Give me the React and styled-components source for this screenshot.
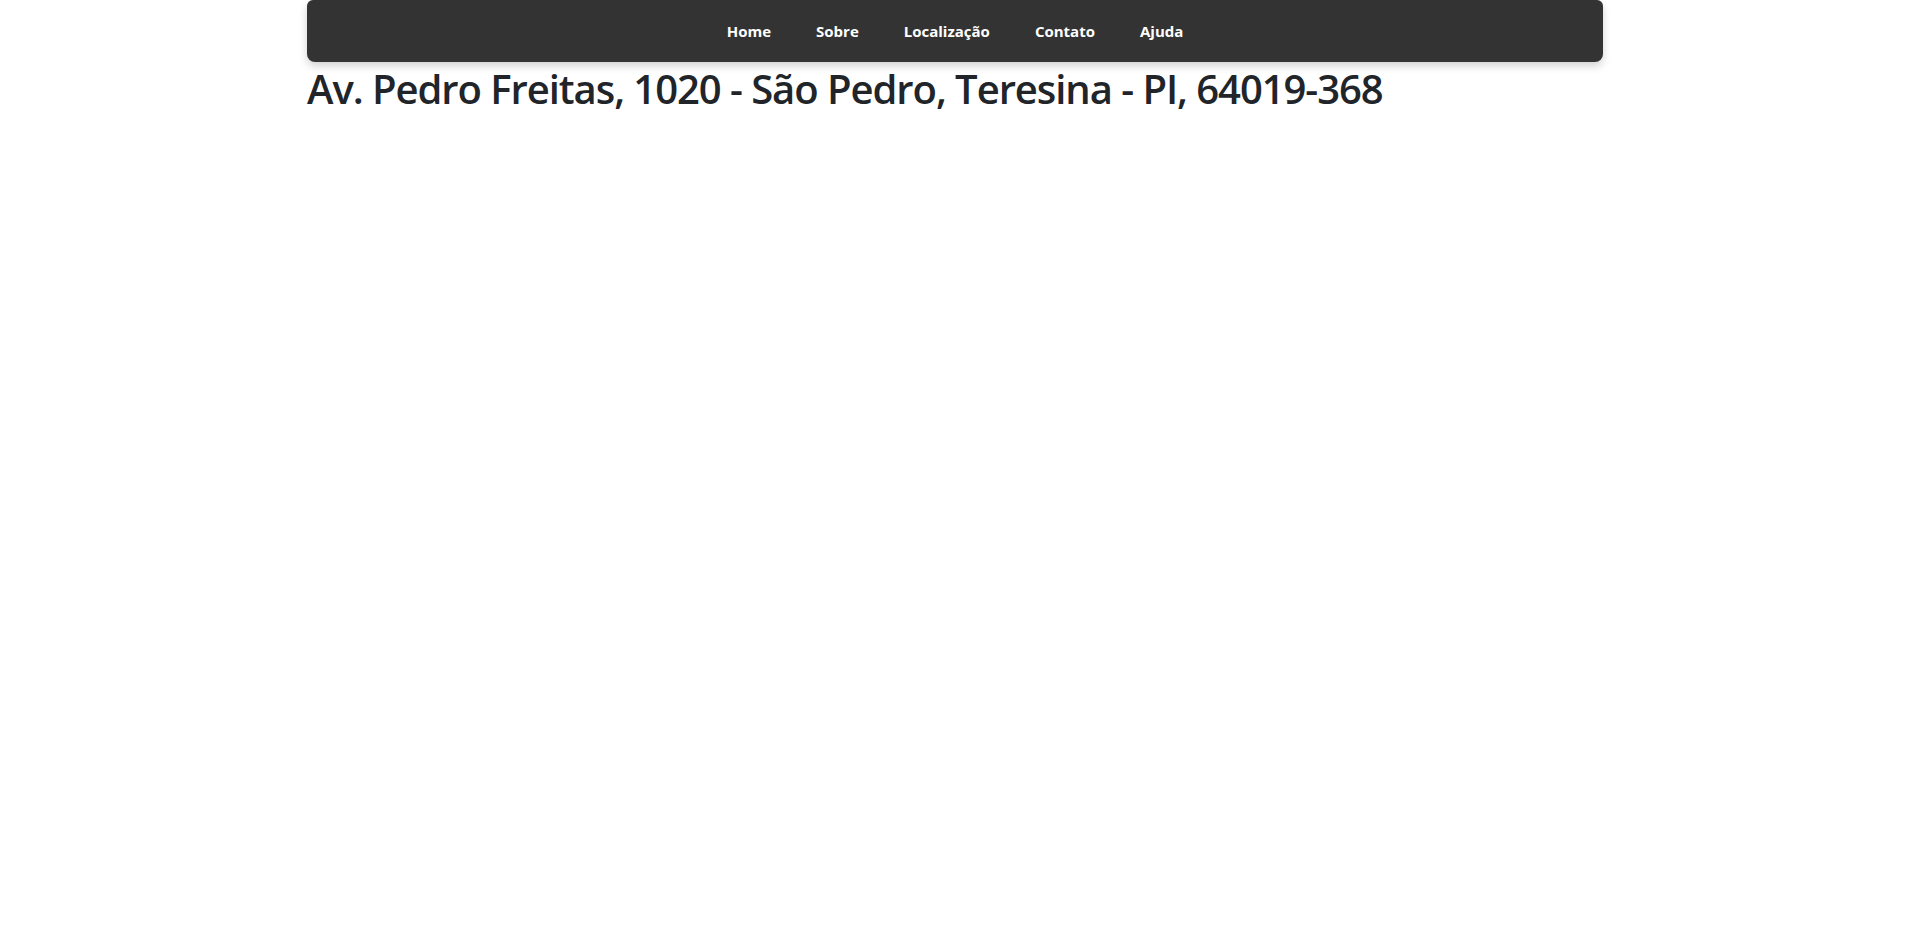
import React from 'react'
import styled, { createGlobalStyle } from 'styled-components'

const GlobalStyle = createGlobalStyle`
  *, *::before, *::after { box-sizing: border-box; }
  body {
    margin: 0;
    background: #fff;
    color: #212529;
    font-family: "Open Sans", "Noto Sans", sans-serif;
  }
`

const Container = styled.div`
  width: 1296px;
  margin-left: 307px;
`

const NavBar = styled.nav`
  height: 62px;
  background: #333333;
  border-radius: 6px 6px 8px 8px;
  box-shadow: 0 4px 8px rgba(0, 0, 0, 0.18);
  display: flex;
  justify-content: center;
  align-items: center;
`

const NavList = styled.ul`
  list-style: none;
  margin: 0;
  padding: 0;
  display: flex;
  gap: 45px;
`

const NavLink = styled.a`
  color: #fff;
  text-decoration: none;
  font-weight: 700;
  font-size: 15px;
  line-height: 1;
`

const Address = styled.h1`
  margin: 0;
  padding-top: 3px;
  font-size: 40px;
  font-weight: 600;
  letter-spacing: -1.05px;
  line-height: 1.2;
  color: #212529;
`

const links = ['Home', 'Sobre', 'Localização', 'Contato', 'Ajuda']

export default function App() {
  return (
    <>
      <GlobalStyle />
      <Container>
        <NavBar>
          <NavList>
            {links.map((l) => (
              <li key={l}><NavLink href="#">{l}</NavLink></li>
            ))}
          </NavList>
        </NavBar>
        <Address>Av. Pedro Freitas, 1020 - São Pedro, Teresina - PI, 64019-368</Address>
      </Container>
    </>
  )
}
